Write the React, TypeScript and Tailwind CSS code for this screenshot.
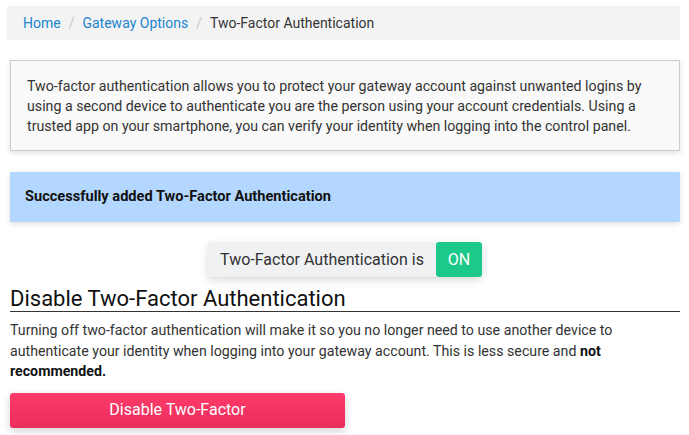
export default function App() {
  return (
    <div className="w-[689px] h-[435px] bg-white overflow-hidden text-[#222] font-['Roboto',sans-serif]">
      <nav className="ml-[7px] mt-[6px] w-[673px] h-[34px] bg-[#f3f3f3] flex items-center pl-[16px] text-[14px]">
        <span className="text-[#2185d0]">Home</span>
        <span className="text-[#c8c8c8] px-[8px]">/</span>
        <span className="text-[#2185d0]">Gateway Options</span>
        <span className="text-[#c8c8c8] px-[8px]">/</span>
        <span className="text-[#333]">Two-Factor Authentication</span>
      </nav>
      <div className="pl-[10px] pr-[9px] w-[689px]">
        <div className="mt-[20px] h-[91px] border border-[#cccccc] bg-[#f9f9f9] shadow-[0_2px_6px_rgba(0,0,0,0.12)] px-[16px] flex items-center text-[14.2px] leading-[20px] text-[#333]">
          <p>
            Two-factor authentication allows you to protect your gateway account against unwanted logins by
            using a second device to authenticate you are the person using your account credentials. Using a
            trusted app on your smartphone, you can verify your identity when logging into the control panel.
          </p>
        </div>
        <div className="mt-[21px] h-[50px] bg-[#b3d7ff] shadow-[0_2px_6px_rgba(0,0,0,0.12)] flex items-center px-[15px] text-[14.6px] font-bold text-[#111]">
          Successfully added Two-Factor Authentication
        </div>
        <div className="mt-[20px] flex justify-center">
          <div className="flex h-[35px] rounded-[3px] shadow-[0_3px_8px_rgba(0,0,0,0.15)]">
            <div className="bg-[#f0f1f3] px-[12px] flex items-center text-[16px] text-[#333] rounded-l-[3px]">
              Two-Factor Authentication is
            </div>
            <div className="w-[46px] bg-[#1dc98a] flex items-center justify-center text-[16px] text-white rounded-[3px]">
              ON
            </div>
          </div>
        </div>
        <h2 className="mt-[10px] text-[22px] leading-[24px] text-[#111] border-b border-[#333]">
          Disable Two-Factor Authentication
        </h2>
        <p className="mt-[8px] text-[14.2px] leading-[20.5px] text-[#333]">
          Turning off two-factor authentication will make it so you no longer need to use another device to
          authenticate your identity when logging into your gateway account. This is less secure and{" "}
          <strong className="text-[#111]">not recommended.</strong>
        </p>
        <button className="mt-[11px] w-[335px] h-[35px] rounded-[3px] bg-gradient-to-b from-[#fe3c6b] to-[#ea2c5c] text-white text-[16px] shadow-[0_3px_8px_rgba(0,0,0,0.18)]">
          Disable Two-Factor
        </button>
      </div>
    </div>
  );
}
